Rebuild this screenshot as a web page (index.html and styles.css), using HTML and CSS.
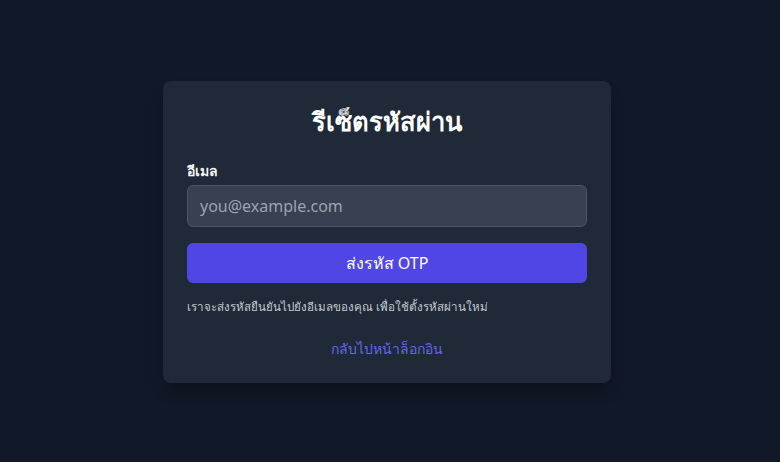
FILE: index.html
```html
<!DOCTYPE html>
<html lang="th">
<head>
<meta charset="utf-8">
<title>รีเซ็ตรหัสผ่าน</title>
<link rel="stylesheet" href="styles.css">
</head>
<body>
<main class="page">
  <form class="card">
    <h1 class="title">รีเซ็ตรหัสผ่าน</h1>
    <label class="label" for="email">อีเมล</label>
    <input class="input" id="email" type="email" placeholder="you@example.com">
    <button class="btn" type="button">ส่งรหัส OTP</button>
    <p class="hint">เราจะส่งรหัสยืนยันไปยังอีเมลของคุณ เพื่อใช้ตั้งรหัสผ่านใหม่</p>
    <a class="back" href="#">กลับไปหน้าล็อกอิน</a>
  </form>
</main>
</body>
</html>
```
FILE: styles.css
```css
* { box-sizing: border-box; }
html, body { margin: 0; height: 100%; }
body {
  background: #111827;
  font-family: "Noto Sans", "Open Sans", sans-serif;
  color: #f9fafb;
}
.page {
  min-height: 100%;
  display: flex;
  align-items: center;
  justify-content: center;
  padding: 2px 6px 0 0;
}
.card {
  width: 448px;
  background: #1f2937;
  border-radius: 8px;
  padding: 24px;
  display: flex;
  flex-direction: column;
  box-shadow: 0 10px 15px -3px rgba(0,0,0,0.3);
}
.title {
  margin: 0 0 24px;
  font-size: 25.5px;
  line-height: 32px;
  font-weight: 700;
  text-align: center;
  color: #ffffff;
}
.label {
  font-size: 14px;
  line-height: 20px;
  font-weight: 600;
  margin-bottom: 4px;
  color: #f3f4f6;
}
.input {
  height: 42px;
  padding: 8px 12px;
  font: inherit;
  font-size: 16px;
  line-height: 24px;
  background: #374151;
  border: 1px solid #4b5563;
  border-radius: 6px;
  color: #f9fafb;
  outline: none;
}
.input::placeholder { color: #9ca3af; }
.btn {
  margin-top: 16px;
  height: 40px;
  border: 0;
  border-radius: 6px;
  background: #4f46e5;
  color: #ffffff;
  font: inherit;
  font-size: 16px;
  line-height: 24px;
  font-weight: 400;
}
.hint {
  margin: 16px 0 0;
  font-size: 11.6px;
  line-height: 16px;
  color: #c4c9d1;
}
.back {
  margin-top: 24px;
  align-self: center;
  font-size: 14px;
  line-height: 20px;
  color: #6366f1;
  text-decoration: none;
}
```
